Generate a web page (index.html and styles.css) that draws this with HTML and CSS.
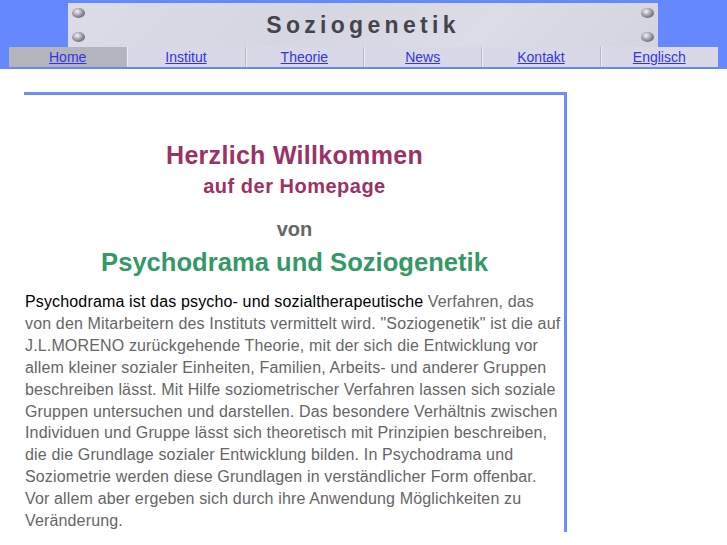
FILE: index.html
```html
<!DOCTYPE html>
<html lang="de">
<head>
<meta charset="utf-8">
<title>Soziogenetik</title>
<link rel="stylesheet" href="styles.css">
</head>
<body>
<div class="top">
  <div class="banner">
    <div class="rivets"><span class="rivet"></span><span class="rivet"></span></div>
    <div class="title">Soziogenetik</div>
    <div class="rivets"><span class="rivet"></span><span class="rivet"></span></div>
  </div>
  <nav class="nav">
    <a class="cell active" href="#">Home</a>
    <a class="cell" href="#">Institut</a>
    <a class="cell" href="#">Theorie</a>
    <a class="cell" href="#">News</a>
    <a class="cell" href="#">Kontakt</a>
    <a class="cell" href="#">Englisch</a>
  </nav>
</div>
<div class="box">
  <h1 class="welcome">Herzlich Willkommen</h1>
  <h2 class="sub">auf der Homepage</h2>
  <h3 class="von">von</h3>
  <h1 class="psy">Psychodrama und Soziogenetik</h1>
  <p class="text"><span class="lead">Psychodrama ist das psycho- und sozialtherapeutische</span> Verfahren, das von den Mitarbeitern des Instituts vermittelt wird. "Soziogenetik" ist die auf J.L.MORENO zurückgehende Theorie, mit der sich die Entwicklung vor allem kleiner sozialer Einheiten, Familien, Arbeits- und anderer Gruppen beschreiben lässt. Mit Hilfe soziometrischer Verfahren lassen sich soziale Gruppen untersuchen und darstellen. Das besondere Verhältnis zwischen Individuen und Gruppe lässt sich theoretisch mit Prinzipien beschreiben, die die Grundlage sozialer Entwicklung bilden. In Psychodrama und Soziometrie werden diese Grundlagen in verständlicher Form offenbar. Vor allem aber ergeben sich durch ihre Anwendung Möglichkeiten zu Veränderung.</p>
</div>
</body>
</html>
```
FILE: styles.css
```css
html, body {
  margin: 0;
  padding: 0;
  background: #ffffff;
  font-family: "Liberation Sans", Arial, sans-serif;
}

.top {
  background: #6688ff;
  padding: 3px 0 2px 0;
}

.banner {
  margin-left: 68px;
  width: 590px;
  height: 44px;
  display: flex;
  justify-content: space-between;
  align-items: stretch;
  background: linear-gradient(135deg, #dcdce8 0%, #d6d6e2 40%, #dcdce6 70%, #d4d4e0 100%);
}

.rivets {
  width: 20px;
  display: flex;
  flex-direction: column;
  justify-content: space-between;
  align-items: center;
  padding: 5px 0 5px 0;
}

.rivet {
  width: 13px;
  height: 10px;
  border-radius: 50%;
  background: radial-gradient(ellipse at 40% 35%, #f4f4f8 0%, #b0b0b8 35%, #707078 70%, #9a9aa2 100%);
}

.title {
  font-size: 23px;
  font-weight: bold;
  color: #44444c;
  letter-spacing: 4.3px;
  line-height: 44px;
}

.nav {
  margin-left: 9px;
  width: 709px;
  height: 20px;
  display: flex;
  background: #d8d8e6;
}

.cell {
  flex: 1;
  text-align: center;
  font-size: 14px;
  line-height: 20px;
  color: #3333ee;
  text-decoration: underline;
  border-left: 1px solid #b8b8c4;
  box-shadow: inset 1px 0 0 #ececf4;
}

.cell:first-child {
  border-left: none;
  box-shadow: none;
}

.cell.active {
  background: #b4b4bc;
}

.box {
  margin: 23px 0 0 24px;
  width: 539px;
  border-top: 3px solid #6e8cff;
  border-right: 3px solid #6e8cff;
  padding: 0 0 0 1px;
  text-align: center;
}

.welcome {
  margin: 45px 0 0 0;
  font-size: 25px;
  letter-spacing: 0.3px;
  line-height: 30px;
  color: #993366;
}

.sub {
  margin: 4px 0 0 0;
  font-size: 20px;
  letter-spacing: 0.5px;
  line-height: 24px;
  color: #993366;
}

.von {
  margin: 19px 0 0 0;
  font-size: 20px;
  line-height: 24px;
  color: #666666;
}

.psy {
  margin: 5px 0 0 0;
  font-size: 25.6px;
  line-height: 32px;
  color: #339966;
}

.text {
  margin: 13px 0 0 0;
  padding-right: 2px;
  text-align: left;
  font-size: 16px;
  letter-spacing: 0.15px;
  line-height: 21.9px;
  color: #666666;
}

.lead {
  color: #000000;
}
```
